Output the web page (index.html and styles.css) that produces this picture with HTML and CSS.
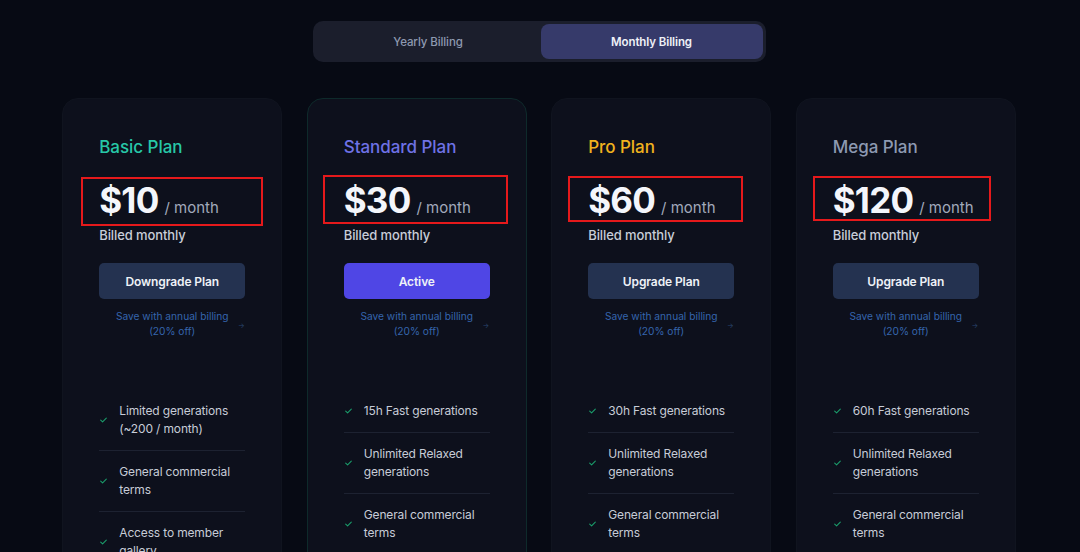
FILE: index.html
```html
<!DOCTYPE html>
<html lang="en">
<head>
<meta charset="utf-8">
<title>Pricing</title>
<link rel="stylesheet" href="styles.css">
</head>
<body>
<main class="page">
  <div class="toggle">
    <button class="toggle-btn">Yearly Billing</button>
    <button class="toggle-btn is-active">Monthly Billing</button>
  </div>

  <section class="plans">
    <article class="card">
      <span class="mark mark-1"></span>
      <h2 class="plan-name basic">Basic Plan</h2>
      <div class="price"><span class="amount">$10</span><span class="per">/ month</span></div>
      <p class="billed">Billed monthly</p>
      <button class="cta">Downgrade Plan</button>
      <div class="save"><span></span><span class="save-text">Save with annual billing<br>(20% off)</span><span class="arrow">→</span></div>
      <ul class="features">
        <li><svg class="check" viewBox="0 0 10 8"><path d="M1 4.2 3.7 6.8 9 1.2"/></svg><span>Limited generations (~200 / month)</span></li>
        <li><svg class="check" viewBox="0 0 10 8"><path d="M1 4.2 3.7 6.8 9 1.2"/></svg><span>General commercial terms</span></li>
        <li><svg class="check" viewBox="0 0 10 8"><path d="M1 4.2 3.7 6.8 9 1.2"/></svg><span>Access to member gallery</span></li>
        <li><svg class="check" viewBox="0 0 10 8"><path d="M1 4.2 3.7 6.8 9 1.2"/></svg><span>Optional credit top ups</span></li>
      </ul>
    </article>

    <article class="card featured">
      <span class="mark mark-2"></span>
      <h2 class="plan-name standard">Standard Plan</h2>
      <div class="price"><span class="amount">$30</span><span class="per">/ month</span></div>
      <p class="billed">Billed monthly</p>
      <button class="cta active">Active</button>
      <div class="save"><span></span><span class="save-text">Save with annual billing<br>(20% off)</span><span class="arrow">→</span></div>
      <ul class="features">
        <li><svg class="check" viewBox="0 0 10 8"><path d="M1 4.2 3.7 6.8 9 1.2"/></svg><span>15h Fast generations</span></li>
        <li><svg class="check" viewBox="0 0 10 8"><path d="M1 4.2 3.7 6.8 9 1.2"/></svg><span>Unlimited Relaxed generations</span></li>
        <li><svg class="check" viewBox="0 0 10 8"><path d="M1 4.2 3.7 6.8 9 1.2"/></svg><span>General commercial terms</span></li>
        <li><svg class="check" viewBox="0 0 10 8"><path d="M1 4.2 3.7 6.8 9 1.2"/></svg><span>Access to member gallery</span></li>
      </ul>
    </article>

    <article class="card">
      <span class="mark mark-3"></span>
      <h2 class="plan-name pro">Pro Plan</h2>
      <div class="price"><span class="amount">$60</span><span class="per">/ month</span></div>
      <p class="billed">Billed monthly</p>
      <button class="cta">Upgrade Plan</button>
      <div class="save"><span></span><span class="save-text">Save with annual billing<br>(20% off)</span><span class="arrow">→</span></div>
      <ul class="features">
        <li><svg class="check" viewBox="0 0 10 8"><path d="M1 4.2 3.7 6.8 9 1.2"/></svg><span>30h Fast generations</span></li>
        <li><svg class="check" viewBox="0 0 10 8"><path d="M1 4.2 3.7 6.8 9 1.2"/></svg><span>Unlimited Relaxed generations</span></li>
        <li><svg class="check" viewBox="0 0 10 8"><path d="M1 4.2 3.7 6.8 9 1.2"/></svg><span>General commercial terms</span></li>
        <li><svg class="check" viewBox="0 0 10 8"><path d="M1 4.2 3.7 6.8 9 1.2"/></svg><span>Access to member gallery</span></li>
      </ul>
    </article>

    <article class="card">
      <span class="mark mark-4"></span>
      <h2 class="plan-name mega">Mega Plan</h2>
      <div class="price"><span class="amount">$120</span><span class="per">/ month</span></div>
      <p class="billed">Billed monthly</p>
      <button class="cta">Upgrade Plan</button>
      <div class="save"><span></span><span class="save-text">Save with annual billing<br>(20% off)</span><span class="arrow">→</span></div>
      <ul class="features">
        <li><svg class="check" viewBox="0 0 10 8"><path d="M1 4.2 3.7 6.8 9 1.2"/></svg><span>60h Fast generations</span></li>
        <li><svg class="check" viewBox="0 0 10 8"><path d="M1 4.2 3.7 6.8 9 1.2"/></svg><span>Unlimited Relaxed generations</span></li>
        <li><svg class="check" viewBox="0 0 10 8"><path d="M1 4.2 3.7 6.8 9 1.2"/></svg><span>General commercial terms</span></li>
        <li><svg class="check" viewBox="0 0 10 8"><path d="M1 4.2 3.7 6.8 9 1.2"/></svg><span>Access to member gallery</span></li>
      </ul>
    </article>
  </section>
</main>
</body>
</html>
```

FILE: styles.css
```css
* { box-sizing: border-box; }
html, body { margin: 0; padding: 0; overflow: hidden; }
body {
  background: #070a14;
  font-family: Inter, "Noto Sans", "Liberation Sans", sans-serif;
  color: #c9ced9;
  -webkit-font-smoothing: antialiased;
}
.page {
  display: flex;
  flex-direction: column;
  align-items: center;
  padding-top: 21px;
}
.toggle {
  width: 453px;
  height: 41px;
  padding: 3px;
  display: grid;
  grid-template-columns: 225px 1fr;
  background: #1b1e2c;
  border-radius: 10px;
  margin-right: 2px;
}
.toggle-btn {
  border: 0;
  background: transparent;
  color: #8e99b0;
  font-family: inherit;
  font-size: 11.5px;
  font-weight: 500;
  border-radius: 8px;
  letter-spacing: -0.1px;
}
.toggle-btn.is-active {
  background: #363a6a;
  color: #eef0f7;
  font-weight: 600;
}
.plans {
  margin-top: 36px;
  margin-right: 2px;
  display: grid;
  grid-template-columns: repeat(4, 220px);
  gap: 24.5px;
}
.card {
  position: relative;
  background: #0d101c;
  border: 1px solid #10141f;
  border-radius: 16px;
  padding: 36px 36px 40px;
  min-height: 640px;
}
.card.featured { border-color: #0e2a2b; }
.plan-name {
  margin: 0;
  font-size: 17px;
  line-height: 24px;
  font-weight: 500;
  letter-spacing: -0.05px;
}
.basic { color: #27c8a8; }
.standard { color: #6f72e6; }
.pro { color: #f0b21e; }
.mega { color: #8d9ab2; }
.price {
  margin-top: 19px;
  display: flex;
  align-items: baseline;
  height: 44px;
}
.amount {
  font-size: 35px;
  line-height: 44px;
  font-weight: 700;
  color: #f4f6fb;
  letter-spacing: -0.8px;
}
.per {
  margin-left: 6px;
  font-size: 15px;
  color: #a1a9bb;
}
.billed {
  margin: 4px 0 0;
  font-size: 13px;
  line-height: 18px;
  font-weight: 500;
  color: #c8cdd8;
  letter-spacing: -0.1px;
}
.cta {
  display: block;
  width: 100%;
  height: 36px;
  margin-top: 19px;
  border: 0;
  border-radius: 5px;
  background: #243250;
  color: #eef1f7;
  font-family: inherit;
  font-size: 12px;
  font-weight: 600;
  letter-spacing: -0.1px;
}
.cta.active { background: #4f46e5; }
.save {
  margin-top: 10px;
  display: grid;
  grid-template-columns: 8px 1fr 8px;
  align-items: center;
  text-align: center;
}
.save-text {
  font-size: 10.2px;
  line-height: 15px;
  color: #3565ad;
}
.arrow {
  font-size: 7px;
  color: #2a4670;
  padding-top: 2px;
}
.features {
  list-style: none;
  margin: 51px 0 0;
  padding: 0;
}
.features li {
  display: flex;
  align-items: center;
  gap: 12px;
  padding: 12px 0;
  border-bottom: 1px solid #1d2231;
  font-size: 12px;
  line-height: 18px;
  color: #c7ccd7;
  letter-spacing: -0.15px;
}
.check {
  flex: none;
  width: 7px;
  height: 6px;
  margin-left: 1px;
  fill: none;
  stroke: #1a9e6c;
  stroke-width: 1.5;
  stroke-linecap: round;
  stroke-linejoin: round;
}
.mark {
  position: absolute;
  border: 2px solid #e5191b;
  pointer-events: none;
}
.mark-1 { left: 18px; top: 78px; width: 182px; height: 49px; }
.mark-2 { left: 15px; top: 76px; width: 185px; height: 49px; }
.mark-3 { left: 16px; top: 77px; width: 175px; height: 46px; }
.mark-4 { left: 16px; top: 77px; width: 178px; height: 45px; }
```
